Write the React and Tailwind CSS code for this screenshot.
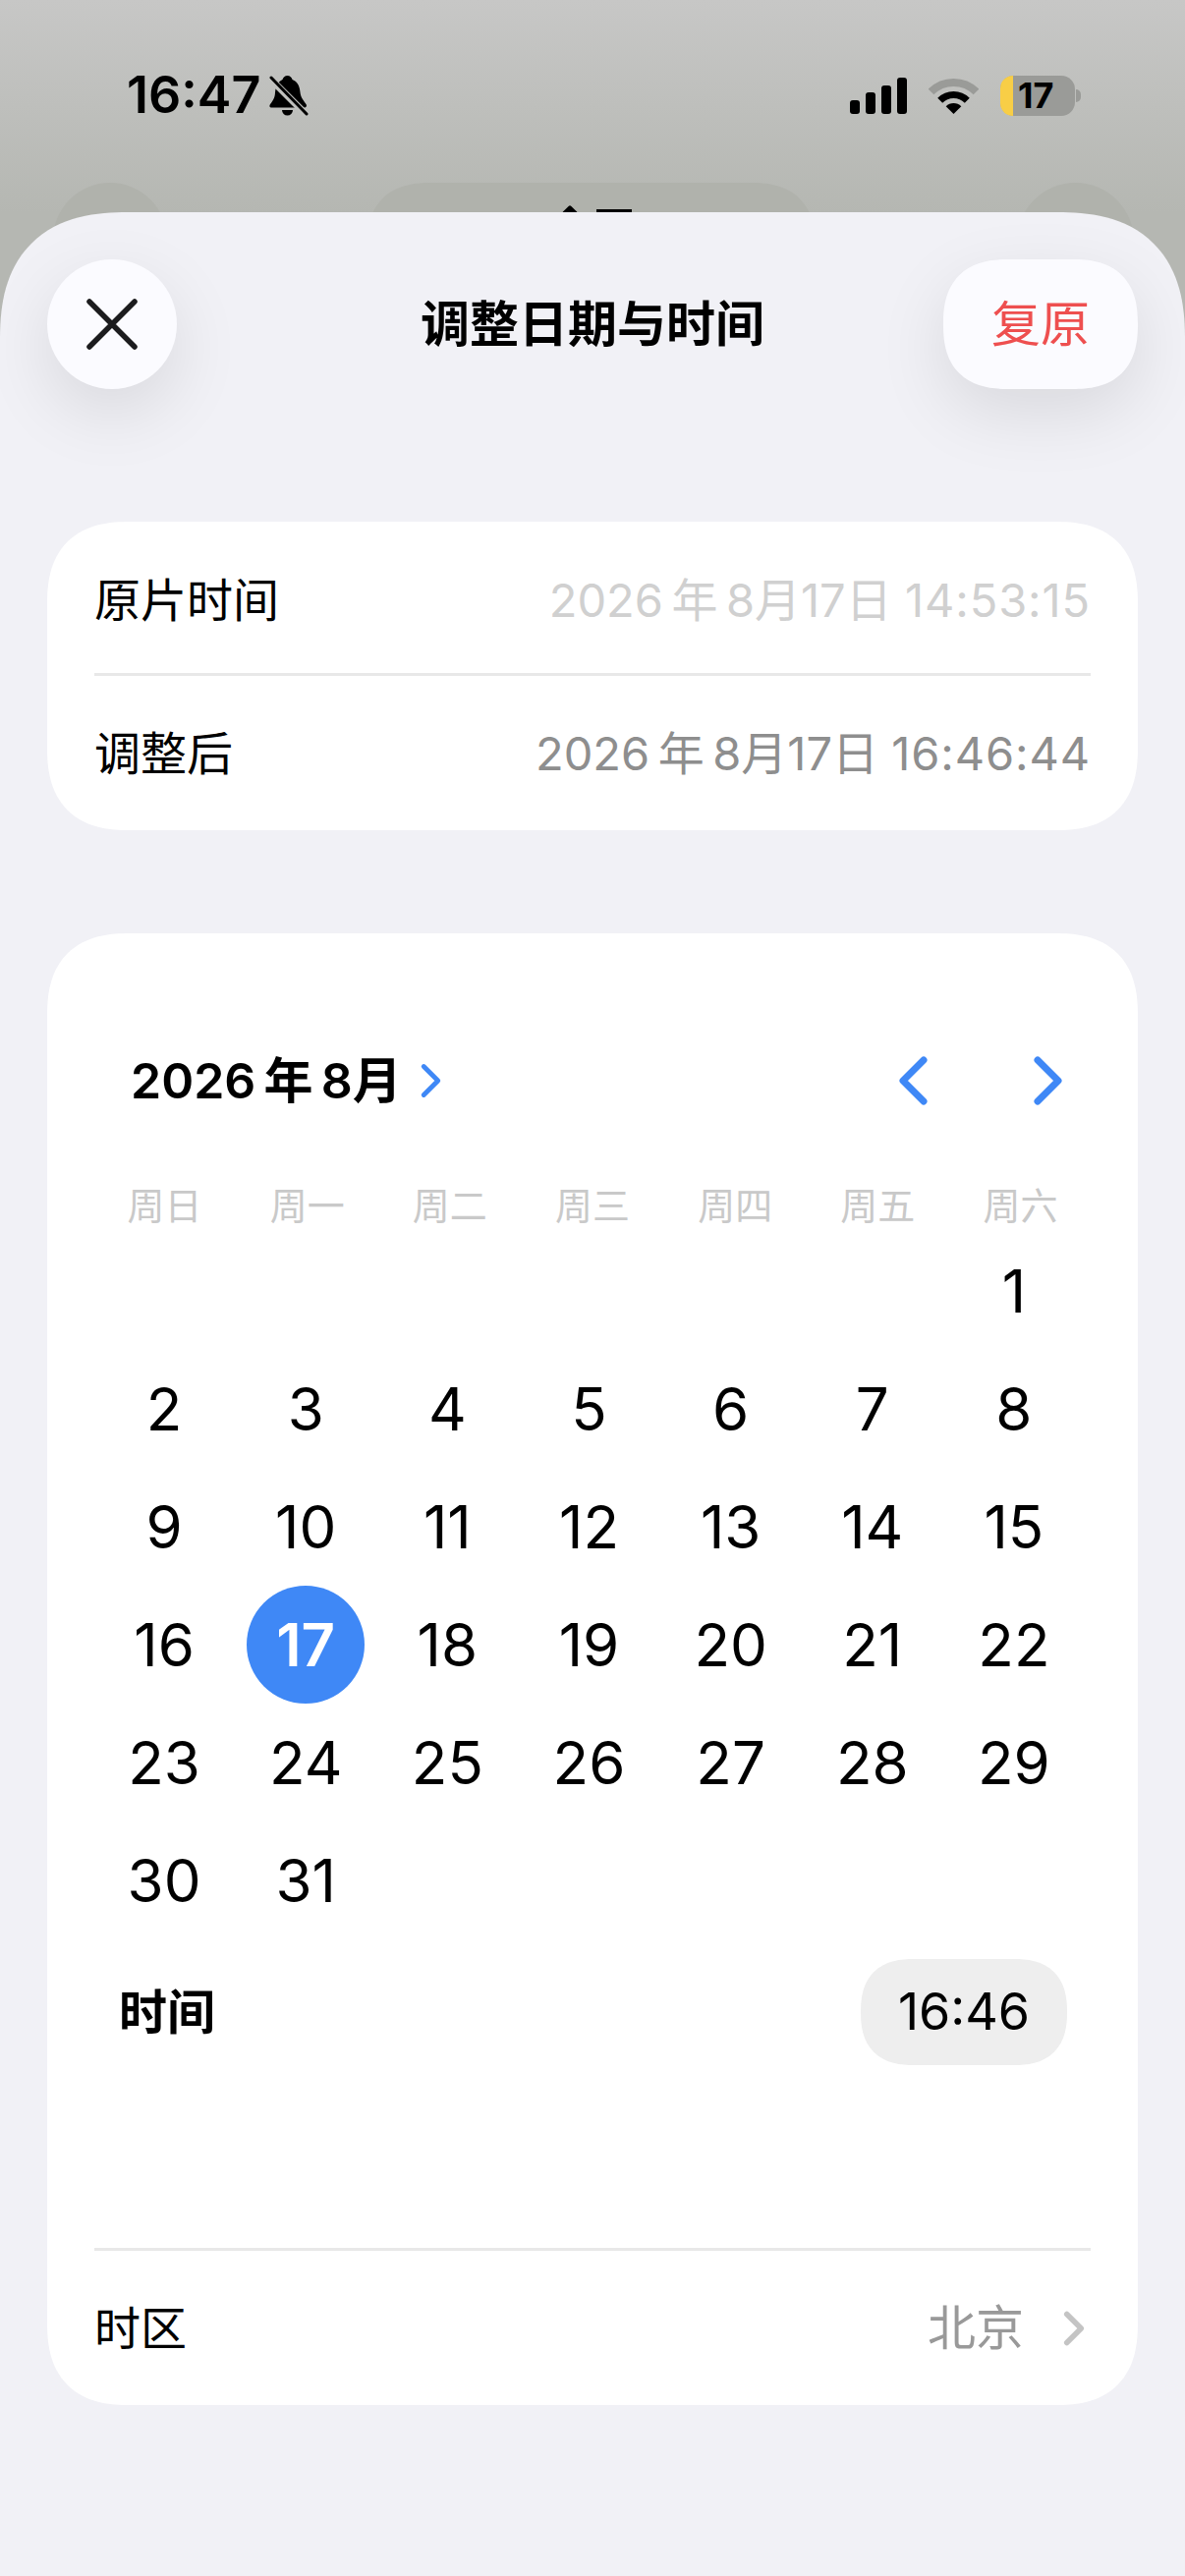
import React from 'react';

const weekdays = ['周日', '周一', '周二', '周三', '周四', '周五', '周六'];
const days = [null, null, null, null, null, null, 1];
for (let d = 2; d <= 31; d++) days.push(d);

const Chevron = ({ dir = 'right', className, color = '#3f88f6', sw = 7 }) => (
  <svg viewBox="0 0 31 52" fill="none" className={className}>
    <path
      d={dir === 'right' ? 'M5 5 L26 26 L5 47' : 'M26 5 L5 26 L26 47'}
      stroke={color}
      strokeWidth={sw}
      strokeLinecap="round"
      strokeLinejoin="round"
    />
  </svg>
);

const StatusBar = () => (
  <div className="relative z-10 flex items-center justify-between h-[44px] pl-[129px] pr-[106px]">
    <div className="flex items-center gap-[9px]">
      <span className="text-[52px] leading-none font-semibold text-black">16:47</span>
      <svg viewBox="0 0 40 43" className="w-[40px] h-[43px]">
        <path
          d="M18.5 1C21 1 23 3 23.5 5C29 7 31 12 31.5 18C32 24 36 27 38 31C38 33 37 33.5 35 33.5L3 33.5C1 33.5 0 33 .5 31C3 27 6 24 6 18C6.5 12 9 7 13.5 5C14 3 16 1 18.5 1Z"
          fill="#000"
        />
        <path d="M13 36H24A5.5 5.5 0 0 1 13 36Z" fill="#000" />
        <path d="M0 3L38 41" stroke="#c0c1be" strokeWidth="7" />
        <path d="M2 3L38 40" stroke="#000" strokeWidth="3" strokeLinecap="round" />
      </svg>
    </div>
    <div className="flex items-center">
      <div className="flex items-end gap-[6px] h-[37px]">
        <div className="w-[10px] h-[14px] rounded-[3px] bg-black" />
        <div className="w-[10px] h-[22px] rounded-[3px] bg-black" />
        <div className="w-[10px] h-[29px] rounded-[3px] bg-black" />
        <div className="w-[10px] h-[37px] rounded-[3px] bg-black" />
      </div>
      <svg viewBox="0 0 51 37" fill="none" className="w-[51px] h-[37px] ml-[22px]">
        <path d="M2.5 14.5A32.5 32.5 0 0 1 48.5 14.5" stroke="#9a9b98" strokeWidth="8" />
        <path d="M11.7 23.2A19.5 19.5 0 0 1 39.3 23.2" stroke="#000" strokeWidth="7" />
        <path d="M25.5 37L17.7 29.2A11 11 0 0 1 33.3 29.2Z" fill="#000" />
      </svg>
      <div className="flex items-center ml-[22px]">
        <div className="flex w-[76px] h-[41px] rounded-[14px] bg-[#9a9b98]">
          <div className="w-[13px] h-full rounded-l-[14px] bg-[#f8ce46]" />
          <span className="pl-[5px] text-[36px] leading-[41px] font-bold text-black">17</span>
        </div>
        <div className="w-[5px] h-[13px] ml-[1px] rounded-r-full bg-[#9a9b98]" />
      </div>
    </div>
  </div>
);

const Row = ({ label, date, time, valueColor, className = '' }) => (
  <div className={`flex items-center justify-between ${className}`}>
    <span className="text-[47px] leading-none text-black">{label}</span>
    <span className={`text-[47px] leading-none ${valueColor}`}>
      {date} <span className="tracking-[0.9px]">{time}</span>
    </span>
  </div>
);

export default function App() {
  return (
    <div className="flex flex-col h-[2622px] w-[1206px] overflow-hidden bg-[#b5b7b2] font-['Inter','Noto_Sans_CJK_SC',sans-serif]">
      {/* backdrop behind the sheet */}
      <div className="relative h-[216px] shrink-0 pt-[75px] bg-linear-to-b from-[#c7c7c6] to-[#b5b7b2]">
        <StatusBar />
        <div className="absolute left-[54px] top-[186px] w-[116px] h-[132px] rounded-full bg-[#b0b2ac]" />
        <div className="absolute left-[373px] top-[186px] w-[457px] h-[132px] rounded-[66px] [corner-shape:superellipse(1.3)] bg-[#b0b2ac]" />
        <div className="absolute left-[1035px] top-[186px] w-[119px] h-[132px] rounded-full bg-[#b0b2ac]" />
        <div className="absolute left-[574px] top-[211px] w-[12px] h-[12px] rotate-45 rounded-[2px] bg-black" />
        <div className="absolute left-[607px] top-[213px] w-[36px] h-[6px] bg-black" />
      </div>

      {/* sheet */}
      <div className="relative z-10 flex-1 overflow-hidden rounded-t-[130px] [corner-shape:superellipse(1.3)] bg-[#f1f1f6] px-[48px] pt-[48px]">
        <div className="grid grid-cols-[198px_1fr_198px] items-center h-[132px]">
          <button className="flex items-center justify-center w-[132px] h-[132px] rounded-full bg-[#fbfbff] shadow-[0_24px_70px_rgba(0,0,0,0.1)]">
            <svg viewBox="0 0 52 52" fill="none" className="w-[52px] h-[52px]">
              <path d="M3 3L49 49M49 3L3 49" stroke="#1c1c1e" strokeWidth="5.5" strokeLinecap="round" />
            </svg>
          </button>
          <div className="text-center text-[50px] leading-none font-semibold text-black">调整日期与时间</div>
          <button className="h-[132px] rounded-[66px] [corner-shape:superellipse(1.3)] bg-[#fbfbff] text-[50px] text-[#ee4f4f] shadow-[0_24px_70px_rgba(0,0,0,0.1)]">
            复原
          </button>
        </div>

        {/* time summary */}
        <div className="mt-[135px] rounded-[84px] [corner-shape:superellipse(1.3)] bg-white px-[48px]">
          <Row label="原片时间" date={'2026\u2009年\u20098月17日'} time="14:53:15" valueColor="text-[#d0d0d0]" className="h-[154px] pt-[4px]" />
          <div className="h-[3px] bg-[#e8e8e8]" />
          <Row label="调整后" date={'2026\u2009年\u20098月17日'} time="16:46:44" valueColor="text-[#8e8e8e]" className="h-[157px]" />
        </div>

        {/* calendar */}
        <div className="mt-[105px] rounded-[84px] [corner-shape:superellipse(1.3)] bg-white px-[48px]">
          <div className="flex items-center justify-between h-[258px] pt-[42px] pl-[37px] pr-[28px]">
            <div className="flex items-center gap-[18px]">
              <span className="text-[50px] leading-none font-semibold text-black">{'2026\u2009年\u20098月'}</span>
              <Chevron className="w-[23px] h-[36px]" sw={7} />
            </div>
            <div className="flex items-center gap-[106px]">
              <Chevron dir="left" className="w-[31px] h-[52px]" />
              <Chevron className="w-[31px] h-[52px]" />
            </div>
          </div>
          <div className="grid grid-cols-7 -mx-[1px] mb-[8px]">
            {weekdays.map((w) => (
              <div key={w} className="text-center text-[38px] leading-none text-[#c9c9c9]">
                {w}
              </div>
            ))}
          </div>
          <div className="grid grid-cols-7 -ml-[1px] mr-[6px]">
            {days.map((d, i) => (
              <div key={i} className="flex items-center justify-center h-[120px]">
                {d === 17 ? (
                  <span className="flex items-center justify-center w-[120px] h-[120px] shrink-0 rounded-full bg-[#3f88f6] text-[60px] font-semibold text-white">
                    {d}
                  </span>
                ) : (
                  <span className="text-[60px] leading-none text-black">{d}</span>
                )}
              </div>
            ))}
          </div>
          <div className="flex items-center justify-between h-[110px] mt-[19px] pl-[25px]">
            <span className="text-[49px] leading-none font-semibold text-black">时间</span>
            <span className="flex items-center justify-center w-[210px] h-[108px] -mr-[-24px] rounded-[54px] [corner-shape:superellipse(1.3)] bg-[#eeeeee] text-[52px] leading-none text-black">
              16:46
            </span>
          </div>
          <div className="h-[3px] mt-[185px] bg-[#e8e8e8]" />
          <div className="flex items-center justify-between h-[157px] pr-[6px]">
            <span className="text-[47px] leading-none text-black">时区</span>
            <div className="flex items-center gap-[40px]">
              <span className="text-[49px] leading-none text-[#999999]">北京</span>
              <Chevron color="#c4c4c4" className="w-[22px] h-[36px]" sw={8} />
            </div>
          </div>
        </div>
      </div>
    </div>
  );
}
